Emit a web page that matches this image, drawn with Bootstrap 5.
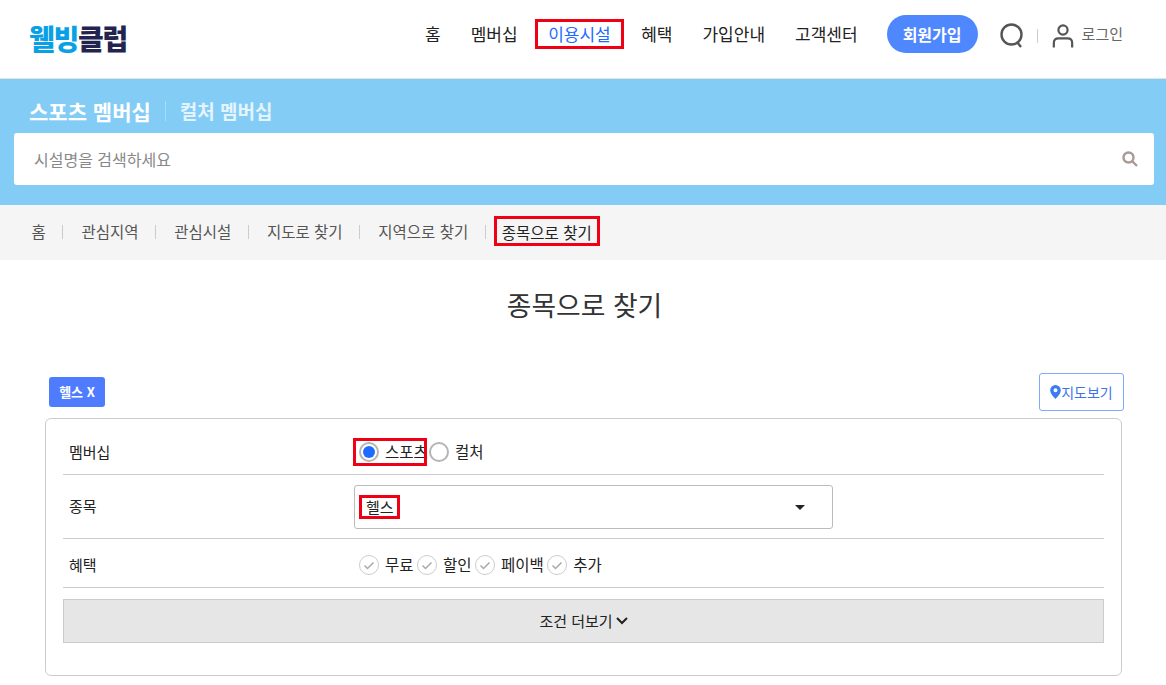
<!DOCTYPE html>
<html lang="ko">
<head>
<meta charset="utf-8">
<title>종목으로 찾기</title>
<link rel="stylesheet" href="https://cdn.jsdelivr.net/npm/bootstrap@5.3.0/dist/css/bootstrap.min.css">
<style>
body{font-family:"Noto Sans CJK KR","Noto Sans",sans-serif;color:#222;background:#fff;overflow:hidden;height:685px}
.site-head{height:79px;padding:0 43px 0 29px;border-bottom:1px solid #e4e4e4}
.logo-text{font-size:28px;font-weight:900;letter-spacing:-1.3px;line-height:1;color:#22244f;margin-top:-3px}
.logo-text b{color:#0aa0e6;font-weight:900}
.gnb{margin-right:14px;margin-top:-10px}
.gnb a{font-size:17px;color:#222;text-decoration:none;font-weight:400;line-height:24px;display:block}
.gnb-item{padding:0 15px}
.gnb-item.hit{padding:1px 11.5px;margin:0 4px}
.hit{outline:3px solid #ef0014;outline-offset:-1px}
.gnb a.on{color:#1f6bff}
.join-btn{width:91px;height:38px;border-radius:19px;background:#4f87ff;color:#fff;font-size:16px;font-weight:700;border:0;padding:0;margin-top:-10px}
.ico-search{margin:-7px 0 0 22px}
.sep-v{width:1px;height:14px;background:#ccc;margin:-7px 14px 0 13px}
.ico-user{margin-top:-7px}
.login-txt{font-size:15px;color:#666;margin:-10px 0 0 8px;line-height:20px}
.blue-band{height:126px;background:#83ccf5;padding:0 12px 0 14px}
.tab-row{height:54px;padding-left:15px;padding-top:9px}
.tab-row span{font-size:21px;font-weight:700;color:#fff;line-height:28px}
.tab-row span.off{color:#e4f4fd;font-size:19px}
.tab-sep{width:1px;height:20px;background:#a9dcf8;margin:0 14px}
.search-line{height:52px;background:#fff;border-radius:3px;padding:0 16px 0 20px;font-size:16px;color:#888}
.crumbs{height:55px;background:#f5f5f5;padding:0 0 1px 31.5px;font-size:15.5px;color:#555}
.crumb-sep{width:1px;height:14px;background:#ccc;margin:0 18.2px 0 16.5px}
.crumb-hit{color:#222;padding:2px 6.5px 0 6px;line-height:24px;margin:0 0 2px -8px}
.page-title{font-size:26.8px;font-weight:400;color:#333;text-align:center;line-height:40px;margin:25px 0 49px;padding-left:3px}
.tool-row{padding:0 42px 0 49px;height:45px;margin-top:-1px}
.chip{width:56px;height:30px;background:#4f7cff;border-radius:3px;color:#fff;font-size:13px;font-weight:700;margin-top:4px}
.map-btn{width:85px;height:38px;border:1px solid #7daaff;border-radius:3px;background:#fff;color:#3f72ea;font-size:14px;font-weight:400;padding:0}
.filter-box{margin:0 44px 0 45px;height:258px;border:1px solid #ccc;border-radius:6px;padding:0 17px}
.f-row{border-bottom:1px solid #ccc}
.f-label{width:291px;padding-left:6px;font-size:15px;color:#222}
.r1{height:56px;padding-top:11px}.r2{height:64px;padding-top:1px}.r3{height:49px;padding-top:4px}
.r2 .f-label{margin-top:-2px}
.opt{font-size:15.5px;color:#222}
.rad{width:20px;height:20px;border-radius:50%;border:2px solid #b5b5b5;background:#fff;flex:none;display:block}
.rad.sel{padding:2px}
.rad.sel::after{content:"";display:block;width:12px;height:12px;border-radius:50%;background:#1f6bff}
.radio-hit{padding:0 0 0 4px;width:70px;height:24px;gap:6px;margin-left:1px;white-space:nowrap}
.radio-plain{gap:6px;margin-left:4px}
.benefits{margin-left:5px;gap:3.5px}
.benefits>span{gap:6px}
.combo{width:479px;height:44px;border:1px solid #bbb;border-radius:3px;padding:0 27px 0 6px}
.combo-hit{font-size:15px;padding:0 4.5px 0 5px;line-height:20px}
.caret-dn{width:0;height:0;border-left:5px solid transparent;border-right:5px solid transparent;border-top:5px solid #222}
.more-bar{height:44px;margin-top:11px;background:#e6e6e6;border:1px solid #ccc;font-size:15px;color:#222;gap:3px}
</style>
</head>
<body>
<header class="site-head d-flex align-items-center justify-content-between">
  <div class="logo-text"><b>웰빙</b>클럽</div>
  <div class="d-flex align-items-center">
    <nav class="gnb d-flex align-items-center">
      <div class="gnb-item"><a href="#">홈</a></div>
      <div class="gnb-item"><a href="#">멤버십</a></div>
      <div class="gnb-item hit"><a href="#" class="on">이용시설</a></div>
      <div class="gnb-item"><a href="#">혜택</a></div>
      <div class="gnb-item"><a href="#">가입안내</a></div>
      <div class="gnb-item"><a href="#">고객센터</a></div>
    </nav>
    <button class="join-btn">회원가입</button>
    <svg class="ico-search" width="24" height="26" viewBox="0 0 24 26" fill="none" stroke="#555" stroke-width="2.400"><circle cx="11.500" cy="11.500" r="10"/><path d="M17 19l4 5"/></svg>
    <span class="sep-v"></span>
    <svg class="ico-user" width="22" height="24" viewBox="0 0 24 25" fill="none" stroke="#555" stroke-width="2.400"><circle cx="12" cy="6" r="5"/><path d="M2 25v-5q0-5 5-5h10q5 0 5 5v5"/></svg>
    <span class="login-txt">로그인</span>
  </div>
</header>
<section class="blue-band">
  <div class="tab-row d-flex align-items-center"><span>스포츠 멤버십</span><i class="tab-sep"></i><span class="off">컬처 멤버십</span></div>
  <div class="search-line d-flex align-items-center justify-content-between">
    <span>시설명을 검색하세요</span>
    <svg width="16" height="16" viewBox="0 0 16 16" fill="none" stroke="#a89a94" stroke-width="2.400"><circle cx="6.500" cy="6.500" r="5"/><path d="M10.500 10.500l4.500 4.500"/></svg>
  </div>
</section>
<nav class="crumbs d-flex align-items-center">
  <span>홈</span><i class="crumb-sep"></i><span>관심지역</span><i class="crumb-sep"></i><span>관심시설</span><i class="crumb-sep"></i><span>지도로 찾기</span><i class="crumb-sep"></i><span>지역으로 찾기</span><i class="crumb-sep"></i><span class="crumb-hit hit">종목으로 찾기</span>
</nav>
<h1 class="page-title">종목으로 찾기</h1>
<div class="tool-row d-flex justify-content-between align-items-start">
  <div class="chip d-flex align-items-center justify-content-center">헬스 X</div>
  <button class="map-btn d-flex align-items-center justify-content-center">
    <svg width="11" height="14" viewBox="0 0 11 14"><path fill="#3c7cf0" fill-rule="evenodd" d="M5.500 0a5.300 5.300 0 0 1 5.300 5.300C10.800 9 5.500 14 5.500 14S.2 9 .2 5.300A5.300 5.300 0 0 1 5.500 0zm0 3.300a2 2 0 1 0 0 4 2 2 0 0 0 0-4z"/></svg>지도보기
  </button>
</div>
<section class="filter-box">
  <div class="f-row r1 d-flex align-items-center">
    <div class="f-label">멤버십</div>
    <div class="d-flex align-items-center opt">
      <div class="d-flex align-items-center radio-hit hit"><span class="rad sel"></span>스포츠</div>
      <div class="d-flex align-items-center radio-plain"><span class="rad"></span>컬처</div>
    </div>
  </div>
  <div class="f-row r2 d-flex align-items-center">
    <div class="f-label">종목</div>
    <div class="combo d-flex align-items-center justify-content-between"><span class="combo-hit hit">헬스</span><i class="caret-dn"></i></div>
  </div>
  <div class="f-row r3 d-flex align-items-center">
    <div class="f-label">혜택</div>
    <div class="d-flex align-items-center opt benefits">
      <span class="d-flex align-items-center"><svg width="20" height="20" viewBox="0 0 20 20" fill="none"><circle cx="10" cy="10" r="9.500" stroke="#ccc"/><path d="M5.500 10.500l3 3 6-6" stroke="#aaa" stroke-width="1.500"/></svg>무료</span>
      <span class="d-flex align-items-center"><svg width="20" height="20" viewBox="0 0 20 20" fill="none"><circle cx="10" cy="10" r="9.500" stroke="#ccc"/><path d="M5.500 10.500l3 3 6-6" stroke="#aaa" stroke-width="1.500"/></svg>할인</span>
      <span class="d-flex align-items-center"><svg width="20" height="20" viewBox="0 0 20 20" fill="none"><circle cx="10" cy="10" r="9.500" stroke="#ccc"/><path d="M5.500 10.500l3 3 6-6" stroke="#aaa" stroke-width="1.500"/></svg>페이백</span>
      <span class="d-flex align-items-center"><svg width="20" height="20" viewBox="0 0 20 20" fill="none"><circle cx="10" cy="10" r="9.500" stroke="#ccc"/><path d="M5.500 10.500l3 3 6-6" stroke="#aaa" stroke-width="1.500"/></svg>추가</span>
    </div>
  </div>
  <div class="more-bar d-flex align-items-center justify-content-center">조건 더보기<svg width="12" height="8" viewBox="0 0 12 8" fill="none" stroke="#222" stroke-width="2"><path d="M1 1l5 5 5-5"/></svg></div>
</section>
<script src="https://cdn.jsdelivr.net/npm/bootstrap@5.3.0/dist/js/bootstrap.bundle.min.js"></script>
</body>
</html>
